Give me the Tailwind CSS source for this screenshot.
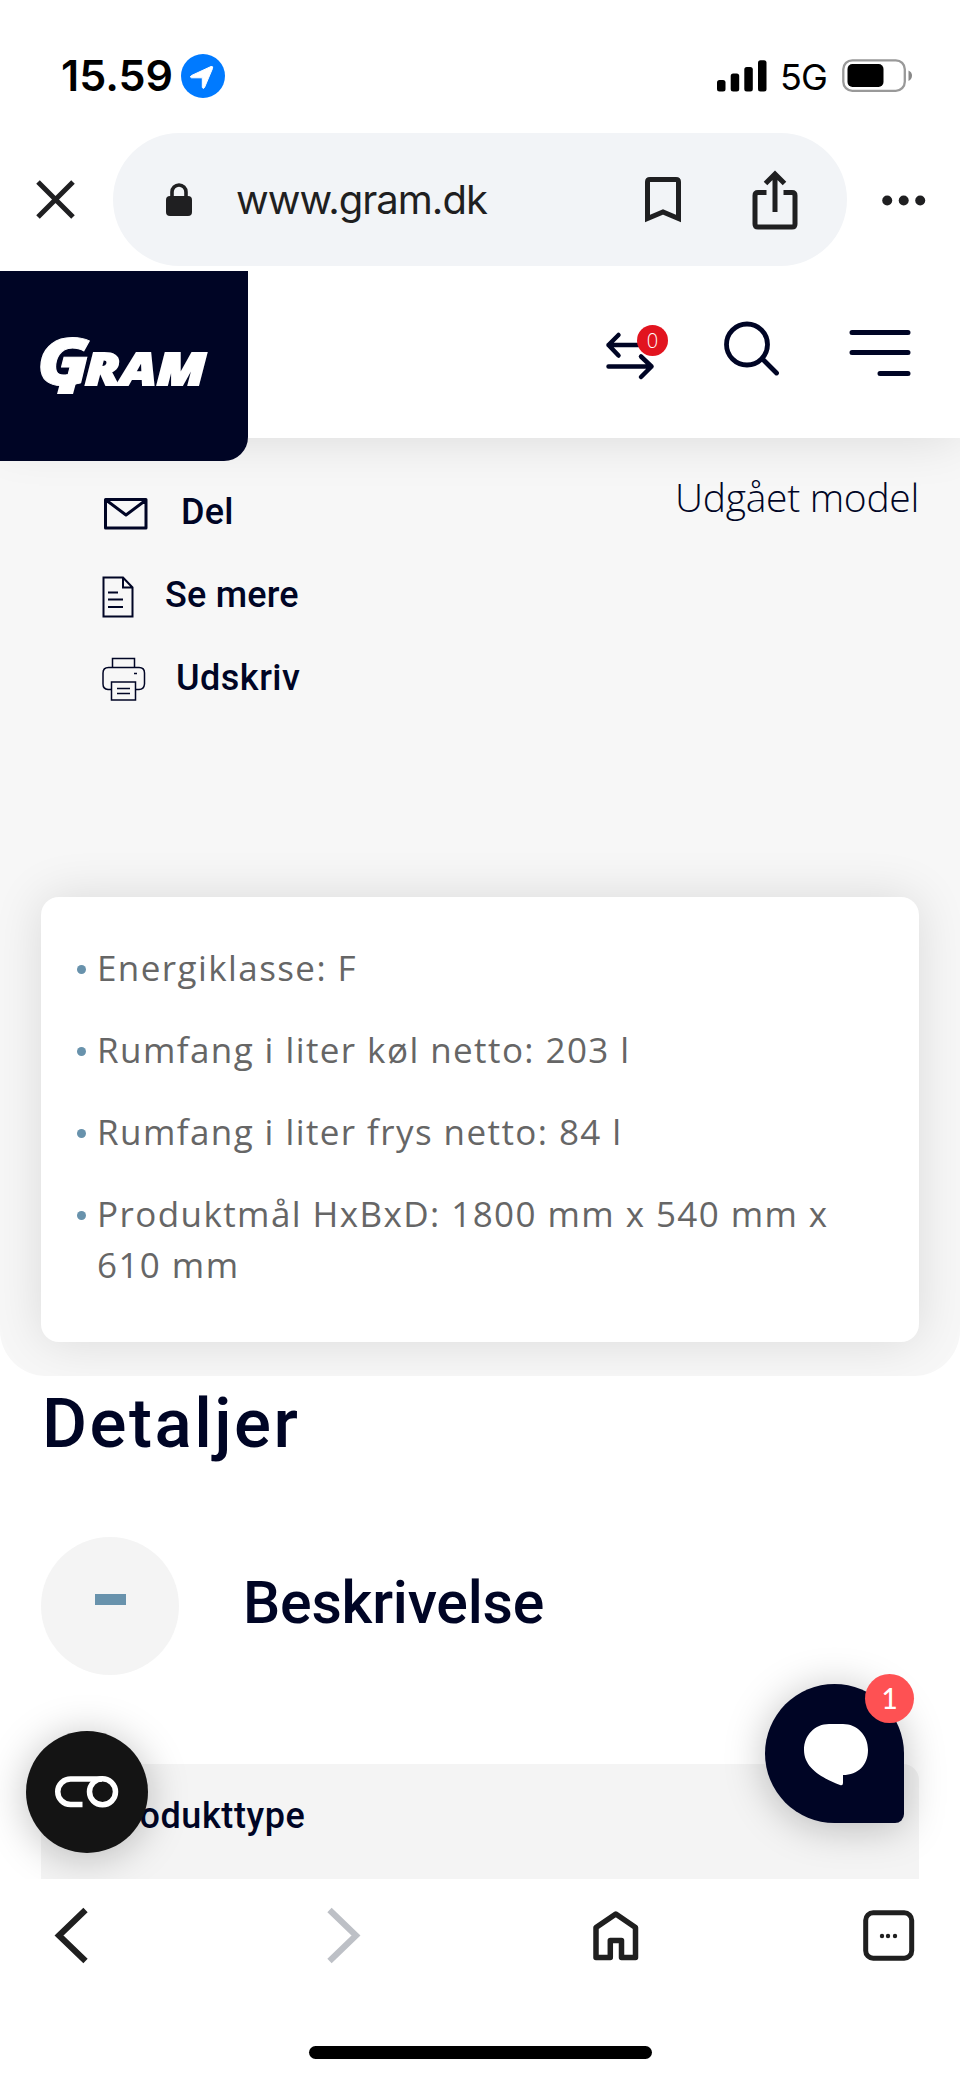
<!DOCTYPE html>
<html lang="da">
<head>
<meta charset="utf-8">
<title>Gram</title>
<script src="https://cdn.jsdelivr.net/npm/@tailwindcss/browser@4"></script>
</head>
<body class="bg-white">
<div class="flex flex-col w-[960px] h-[2079px] bg-white overflow-hidden font-['Open_Sans',sans-serif] text-[#000525]">

  <!-- Status bar -->
  <div class="flex items-center h-[133px] pt-[18px] pl-[61px] pr-[47px] shrink-0 text-black font-['Inter',sans-serif]">
    <span class="w-[120px] text-[43px] leading-none font-semibold tracking-[0px] whitespace-nowrap">15.59</span>
    <svg class="w-[44px] h-[44px]" viewBox="0 0 44 44"><circle cx="22" cy="22" r="22" fill="#007aff"/><path d="M10.500 21.500L30 12.500Q32.500 12 31.500 14.500L23.500 33.500Q22.300 35.300 21.300 33.500V23.800H10.500Q8 22.800 10.500 21.500Z" fill="#fff" stroke="#fff" stroke-width="1" stroke-linejoin="round"/></svg>
    <svg class="w-[50px] h-[32px] ml-auto" viewBox="0 0 50 32"><rect x="0" y="20" width="8.500" height="11.500" rx="2.500"/><rect x="13.700" y="13.500" width="8.500" height="18" rx="2.500"/><rect x="27.300" y="7" width="8.500" height="24.500" rx="2.500"/><rect x="41" y="0.300" width="8.500" height="31.200" rx="2.500"/></svg>
    <span class="ml-[13px] w-[62px] text-[36px] leading-none tracking-[-1px] mt-[3px]">5G</span>
    <svg class="w-[71px] h-[34px]" viewBox="0 0 71 34"><rect x="1.300" y="1.300" width="61.500" height="30.500" rx="9" fill="none" stroke="#999" stroke-width="2.300"/><rect x="5.500" y="5" width="36" height="23" rx="5"/><path d="M66.500 11.500Q70 13 70 16.500T66.500 22Z" fill="#888"/></svg>
  </div>

  <!-- Address bar -->
  <div class="flex h-[138px] shrink-0 text-[#1f1f21]">
    <div class="flex items-center w-[113px] h-[133px] pl-[35px]">
      <svg class="w-[41px] h-[41px]" viewBox="0 0 41 41" fill="none" stroke="#1f1f21" stroke-width="5"><path d="M3 3L38 38M38 3L3 38"/></svg>
    </div>
    <div class="flex items-center w-[734px] h-[133px] rounded-full bg-[#f2f4f7] pl-[53px]">
      <svg class="w-[26px] h-[34px]" viewBox="0 0 26 34"><rect y="13" width="26" height="20" rx="4" fill="#1f1f21"/><path d="M6 14V9a7 7 0 0 1 14 0V14" fill="none" stroke="#1f1f21" stroke-width="3.600"/></svg>
      <span class="ml-[44px] w-[408px] text-[40px] leading-none font-['Inter',sans-serif] tracking-[-1px]">www.gram.dk</span>
      <svg class="w-[38px] h-[48px]" viewBox="0 0 38 48" fill="none" stroke="#1f1f21" stroke-width="5"><path d="M3.500 42.500V6Q3.500 3.500 6 3.500H32Q34.500 3.500 34.500 6V42.500L19 36Z"/></svg>
      <svg class="w-[46px] h-[60px] ml-[70px]" viewBox="0 0 46 60" fill="none" stroke="#1f1f21" stroke-width="5"><path d="M14.500 22.500H6Q3 22.500 3 25.500V54Q3 57 6 57H40Q43 57 43 54V25.500Q43 22.500 40 22.500H31.500M23 42V4M13.500 13.500L23 4L32.500 13.500"/></svg>
    </div>
    <div class="flex items-center h-[133px] pl-[35px]">
      <svg class="w-[44px] h-[12px]" viewBox="0 0 44 12" fill="#1f1f21"><circle cx="5.200" cy="6.500" r="5"/><circle cx="21.700" cy="6.500" r="5"/><circle cx="38.200" cy="6.500" r="5"/></svg>
    </div>
  </div>

  <!-- Site header -->
  <header class="relative z-10 flex items-start h-[167px] shrink-0 bg-white shadow-[0_0_50px_rgba(0,0,0,0.12)] [clip-path:inset(0_0_-80px_0)]">
    <div class="w-[248px] h-[190px] bg-[#000525] rounded-br-[24px] shrink-0">
      <svg class="w-[248px] h-[190px]" viewBox="0 0 248 190" fill="#fff">
        <g font-family="Open Sans, sans-serif" font-weight="800" font-style="italic">
          <text x="37" y="113.500" font-size="65" stroke="#fff" stroke-width="1" textLength="53" lengthAdjust="spacingAndGlyphs">G</text>
          <text x="85" y="113.500" font-size="45" stroke="#fff" stroke-width="2" textLength="121" lengthAdjust="spacingAndGlyphs">RAM</text>
        </g>
        <rect x="60" y="108" width="16" height="15" transform="translate(30 0) skewX(-15)"/>
      </svg>
    </div>
    <div class="flex items-start ml-auto pr-[49px] pt-[50px]">
      <div class="relative w-[64px] h-[60px]">
        <svg class="w-[64px] h-[60px]" viewBox="0 0 64 60" fill="none" stroke="#000525" stroke-width="4.500" stroke-linecap="round" stroke-linejoin="round"><path d="M13.500 14L3.500 24L13.500 34.500M3.500 24H40M3.500 45.500H46.500M36 35.500L46.500 45.500L36 56"/></svg>
        <span class="absolute left-[32px] top-[4px] w-[31px] h-[31px] rounded-full bg-[#e2141f] text-white text-[20px] leading-[31px] text-center font-light">0</span>
      </div>
      <svg class="w-[56px] h-[60px] ml-[54px]" viewBox="0 0 56 60" fill="none" stroke="#000525" stroke-width="4.800" stroke-linecap="round"><circle cx="24" cy="23.500" r="20.500"/><path d="M40 38.500L53.500 52"/></svg>
      <svg class="w-[62px] h-[60px] ml-[70px]" viewBox="0 0 62 60" fill="none" stroke="#000525" stroke-width="5" stroke-linecap="round"><path d="M3 11.500H59M3 31.500H59M31 52.500H59"/></svg>
    </div>
  </header>

  <!-- Product summary -->
  <section class="flex flex-col h-[938px] shrink-0 bg-[#f7f7f7] rounded-b-[46px] overflow-hidden px-[41px]">
    <div class="flex justify-between h-[459px] shrink-0 pt-[32px]">
      <div class="flex flex-col pl-[61px] font-['Roboto',sans-serif] font-medium text-[36px] leading-none">
        <div class="flex items-center h-[83px]">
          <svg class="w-[46px] h-[34px] mt-[4px]" viewBox="0 0 46 34" fill="none" stroke="#000525" stroke-width="3" stroke-linejoin="round"><path d="M3.500 2.500H44V31H3.500ZM4 3L24 18L44 3"/></svg>
          <span class="ml-[33px] tracking-[0.200px]">Del</span>
        </div>
        <div class="flex items-center h-[83px]">
          <svg class="w-[32px] h-[42px] mt-[4px]" viewBox="0 0 32 42" fill="none" stroke="#000525" stroke-width="2"><path d="M1.500 1.500H21L30.500 11.500V40.500H1.500ZM21 1.500V11.500H30.500M6 16.500H16M6 23.500H21M6 31H21"/></svg>
          <span class="ml-[31px] tracking-[0.200px]">Se mere</span>
        </div>
        <div class="flex items-center h-[83px]">
          <svg class="w-[44px] h-[44px] mt-[2px]" viewBox="0 0 44 44" fill="none" stroke="#000525" stroke-width="1.500"><path d="M10.500 10.500V1.500H32.500V10.500M9.500 32.500H6Q1 32 1 27V16Q1 10.500 6.500 10.500H37Q42.500 10.500 42.500 16V27Q42 32.500 37 32.500H33.500M9.500 25H33.500V43H9.500ZM15 31.500H28M15 36.500H28M32 16.500H35"/></svg>
          <span class="ml-[30px] tracking-[0.500px]">Udskriv</span>
        </div>
      </div>
      <div class="mt-[1px] text-[39px] leading-[52px] font-light tracking-[-0.300px] whitespace-nowrap">Udgået model</div>
    </div>
    <ul class="flex flex-col gap-[31px] h-[445px] shrink-0 rounded-[18px] bg-white pt-[45px] pl-[36px] pr-[30px] text-[35px] leading-[51px] tracking-[1.420px] text-[#666] shadow-[0_0_50px_rgba(0,0,0,0.12)]">
      <li class="flex"><i class="w-[9px] h-[9px] mt-[23px] mr-[11px] rounded-full bg-[#6892ac] shrink-0"></i><span>Energiklasse: F</span></li>
      <li class="flex"><i class="w-[9px] h-[9px] mt-[23px] mr-[11px] rounded-full bg-[#6892ac] shrink-0"></i><span>Rumfang i liter køl netto: 203 l</span></li>
      <li class="flex"><i class="w-[9px] h-[9px] mt-[23px] mr-[11px] rounded-full bg-[#6892ac] shrink-0"></i><span>Rumfang i liter frys netto: 84 l</span></li>
      <li class="flex"><i class="w-[9px] h-[9px] mt-[23px] mr-[11px] rounded-full bg-[#6892ac] shrink-0"></i><span>Produktmål HxBxD: 1800 mm x 540 mm x<br>610 mm</span></li>
    </ul>
  </section>

  <!-- Details -->
  <section class="relative flex flex-col h-[503px] shrink-0 px-[41px] overflow-hidden font-['Roboto',sans-serif] font-medium">
    <h1 class="mt-[8px] ml-[1px] h-[80px] leading-[80px] text-[69px] tracking-[2.500px]">Detaljer</h1>
    <div class="flex items-center h-[139px] mt-[73px]">
      <div class="flex items-center justify-center w-[138px] h-[138px] rounded-full bg-[#f4f4f4] pb-[13px]"><i class="w-[31px] h-[11px] bg-[#6892ac]"></i></div>
      <h2 class="ml-[64px] -mt-[8px] text-[59px] leading-none tracking-[-0.200px]">Beskrivelse</h2>
    </div>
    <div class="flex h-[130px] mt-[89px] shrink-0 bg-[#f4f4f4] rounded-t-[16px] pl-[62px] pt-[26px] text-[36px] leading-[52px] tracking-[0.600px]">Produkttype</div>

    <div class="absolute left-[26px] top-[355px] flex items-center justify-center w-[122px] h-[122px] rounded-full bg-[#141414] shadow-[0_4px_40px_rgba(0,0,0,0.25)]">
      <svg class="w-[64px] h-[32px]" viewBox="0 0 64 32" fill="none" stroke="#fff" stroke-width="5.500"><path d="M27.500 28.500H15.500A12.700 12.700 0 0 1 15.500 3H47"/><circle cx="47.500" cy="15.800" r="13"/></svg>
    </div>
    <div class="absolute left-[765px] top-[308px] w-[139px] h-[139px] rounded-t-[70px] rounded-bl-[70px] rounded-br-[9px] bg-[#000525] shadow-[0_4px_40px_rgba(0,0,0,0.25)]">
      <svg class="w-[139px] h-[139px]" viewBox="0 0 139 139"><path d="M64 40H78C92 40 103 51 103 66S93 91 78 91V99Q78 102 75 101C57 94 39 84 39 66C39 51 50 40 64 40Z" fill="#fff"/></svg>
      <span class="absolute left-[100px] -top-[10px] w-[49px] h-[49px] rounded-full bg-[#fe5153] text-white text-[28px] leading-[48px] text-center font-['Lato',sans-serif] font-medium">1</span>
    </div>
  </section>

  <!-- Browser toolbar -->
  <nav class="flex items-start h-[167px] shrink-0 pt-[28px] pl-[53px] bg-white">
    <svg class="w-[36px] h-[58px]" viewBox="0 0 36 58" fill="none" stroke="#1f1f1f" stroke-width="6.200"><path d="M32.500 3L6 28.500L32.500 54"/></svg>
    <svg class="w-[36px] h-[58px] ml-[236px]" viewBox="0 0 36 58" fill="none" stroke="#bdc0c6" stroke-width="6.200"><path d="M4.500 3L31 28.500L4.500 54"/></svg>
    <svg class="w-[46px] h-[58px] ml-[232px]" viewBox="0 0 46 58" fill="none" stroke="#1f1f1f" stroke-width="5.500" stroke-linejoin="round"><path d="M3 20.500L22.800 7L42.500 20.500V50.500H28.500V33.500H17.300V50.500H3Z"/></svg>
    <svg class="w-[52px] h-[58px] ml-[224px]" viewBox="0 0 52 58" fill="none" stroke="#1f1f1f" stroke-width="5"><rect x="2.700" y="5.700" width="46" height="45.500" rx="7.500"/><g fill="#1f1f1f" stroke="none"><circle cx="19" cy="29" r="2.200"/><circle cx="25" cy="29" r="2.200"/><circle cx="32" cy="29" r="2.200"/></g></svg>
  </nav>
  <div class="w-[343px] h-[13px] ml-[309px] rounded-full bg-black shrink-0"></div>
</div>
</body>
</html>
